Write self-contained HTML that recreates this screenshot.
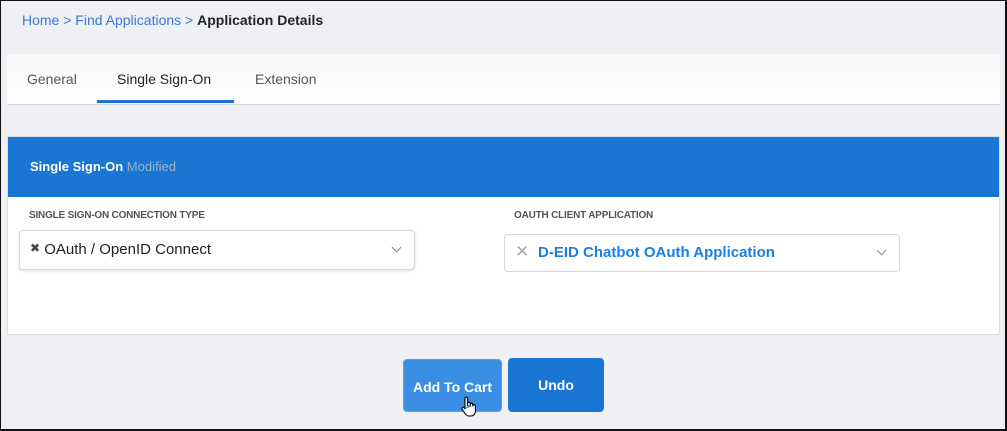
<!DOCTYPE html>
<html><head><meta charset="utf-8"><style>
*{box-sizing:border-box;margin:0;padding:0}
body{width:1007px;height:431px;overflow:hidden;background:#eff0f4;font-family:"Liberation Sans",sans-serif;position:relative}
.frame{position:absolute;left:0;top:0;width:1007px;height:431px;border:1px solid #111;border-right:2px solid #111;border-bottom:2px solid #111;pointer-events:none}
.crumb{position:absolute;left:22px;top:12px;font-size:14px;color:#3a78d6}
.crumb b{color:#222;font-weight:bold}
.tabs{position:absolute;left:7px;top:54px;width:993px;height:51px;background:linear-gradient(#f7f8f8,#fff);border-bottom:1px solid #d8dadf}
.tab{position:absolute;top:17px;font-size:14px;color:#555}
.ul{position:absolute;left:90px;top:46px;width:137px;height:3px;background:#1b74d2}
.card{position:absolute;left:7px;top:136px;width:993px;height:199px;background:#fff;border:1px solid #dcdde2;border-radius:2px}
.hd{height:60px;background:#1976d2;color:#fff;font-size:13px;font-weight:bold;padding:22px 0 0 22px}
.hd span{color:#9cb3cc;font-weight:normal}
.lbl{position:absolute;font-size:10px;color:#555;font-weight:bold;letter-spacing:-0.2px}
.sel{position:absolute;background:#fff;border:1px solid #d5d7db;border-radius:4px}
.chev{position:absolute;right:14px;top:13px;width:7px;height:7px;border-right:1.2px solid #888;border-bottom:1.2px solid #888;transform:rotate(45deg)}
.btn{position:absolute;top:358px;height:54px;border-radius:4px;color:#fff;font-size:14px;font-weight:bold;text-align:center;line-height:54px}
</style></head><body>
<div class="crumb">Home &gt; Find Applications &gt; <b>Application Details</b></div>
<div class="tabs">
<div class="tab" style="left:20px">General</div>
<div class="tab" style="left:110px;color:#222">Single Sign-On</div>
<div class="tab" style="left:248px">Extension</div>
<div class="ul"></div>
</div>
<div class="card">
<div class="hd">Single Sign-On <span>Modified</span></div>
<div class="lbl" style="left:21px;top:73px">SINGLE SIGN-ON CONNECTION TYPE</div>
<div class="lbl" style="left:506px;top:73px">OAUTH CLIENT APPLICATION</div>
<div class="sel" style="left:11px;top:93px;width:396px;height:40px;box-shadow:0 1px 3px rgba(0,0,0,.12)"><span style="position:absolute;left:10px;top:10px;font-size:15px;color:#222"><span style="font-size:12px;color:#444;position:relative;top:-2px">✖</span> OAuth / OpenID Connect</span><div class="chev"></div></div>
<div class="sel" style="left:496px;top:97px;width:396px;height:38px"><span style="position:absolute;left:10px;top:7px;font-size:17px;color:#aaa">✕</span><span style="position:absolute;left:33px;top:9px;font-size:15px;font-weight:bold;color:#1a7ee8">D-EID Chatbot OAuth Application</span><div class="chev" style="top:12px"></div></div>
</div>
<div class="btn" style="left:403px;width:99px;background:#3a8fe4;top:359px;height:53px;border:1px solid #5aa0e8">Add To Cart</div>
<div class="btn" style="left:508px;width:96px;background:#1a76d4">Undo</div>
<svg style="position:absolute;left:460px;top:395px" width="18" height="24" viewBox="0 0 18 24"><path d="M5 14V3.5a1.3 1.3 0 0 1 2.6 0V11 M7.6 10V8.5a1.3 1.3 0 0 1 2.6 0V11 M10.2 10.5V9.5a1.3 1.3 0 0 1 2.6 0V11.5 M12.8 11a1.3 1.3 0 0 1 2.6 0V16c0 3-2 5-4.5 5H9c-2 0-3-1-4-2.5L2 14a1.3 1.3 0 0 1 2-1.5L5 14" fill="#fff" stroke="#000" stroke-width="1.1"/></svg>
<div class="frame"></div>
</body></html>
